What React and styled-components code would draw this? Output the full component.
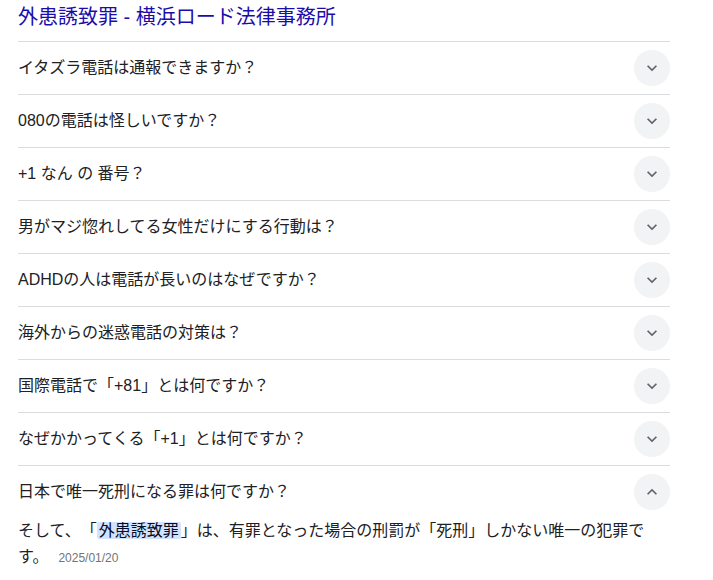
import styled, { createGlobalStyle } from 'styled-components';

const GlobalStyle = createGlobalStyle`
	body {
		margin: 0;
		background: #fff;
		font-family: Arial, 'Liberation Sans', 'Noto Sans CJK JP', sans-serif;
		color: #202124;
		text-spacing-trim: space-all;
	}
`;

const questions = [
	'イタズラ電話は通報できますか？',
	'080の電話は怪しいですか？',
	'+1 なん の 番号？',
	'男がマジ惚れしてる女性だけにする行動は？',
	'ADHDの人は電話が長いのはなぜですか？',
	'海外からの迷惑電話の対策は？',
	'国際電話で「+81」とは何ですか？',
	'なぜかかってくる「+1」とは何ですか？',
];

function Chevron({ up }) {
	return (
		<svg width="20" height="20" viewBox="0 0 24 24" style={up ? { transform: 'rotate(180deg)' } : undefined}>
			<path fill="#5f6368" d="M16.59 8.59L12 13.17 7.41 8.59 6 10l6 6 6-6z" />
		</svg>
	);
}

function App() {
	return (
		<Page>
			<GlobalStyle />
			<Title>外患誘致罪 - 横浜ロード法律事務所</Title>
			<List>
				{questions.map((q) => (
					<Row key={q}>
						<Question>{q}</Question>
						<Toggle>
							<Chevron />
						</Toggle>
					</Row>
				))}
				<Row>
					<Question>日本で唯一死刑になる罪は何ですか？</Question>
					<Toggle>
						<Chevron up />
					</Toggle>
				</Row>
			</List>
			<Answer>
				そして、「<Mark>外患誘致罪</Mark>」は、有罪となった場合の刑罰が「死刑」しかない唯一の犯罪です。
				<DateText>2025/01/20</DateText>
			</Answer>
		</Page>
	);
}

export default App;

const Page = styled.div`
	width: 652px;
	padding: 4px 0 0 18px;
`;

const Title = styled.div`
	font-size: 20px;
	line-height: 26px;
	color: #1a0dab;
	padding-bottom: 11px;
`;

const List = styled.div`
	display: flex;
	flex-direction: column;
`;

const Row = styled.div`
	display: flex;
	align-items: center;
	justify-content: space-between;
	height: 52px;
	border-top: 1px solid #dadce0;
`;

const Question = styled.div`
	font-size: 16px;
	line-height: 24px;
	color: #202124;
`;

const Toggle = styled.div`
	width: 36px;
	height: 36px;
	border-radius: 50%;
	background: #f1f3f4;
	display: flex;
	align-items: center;
	justify-content: center;
`;

const Answer = styled.div`
	font-size: 16px;
	line-height: 26px;
	color: #202124;
`;

const Mark = styled.span`
	background: #d3e3fd;
	color: #040c28;
	padding: 0 2px;
	border-radius: 2px;
`;

const DateText = styled.span`
	font-size: 12px;
	color: #70757a;
	margin-left: 10px;
`;
